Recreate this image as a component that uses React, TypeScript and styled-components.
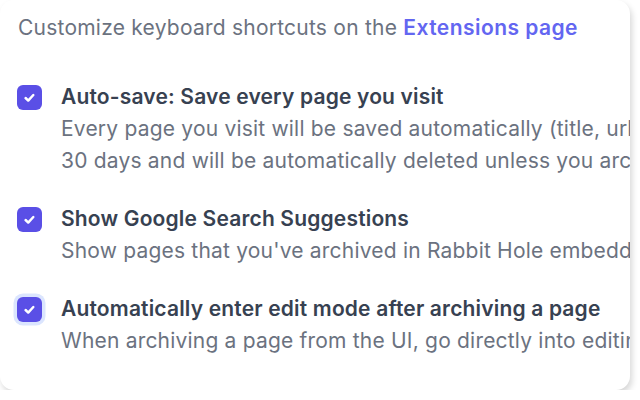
import React from 'react';
import styled, { createGlobalStyle } from 'styled-components';

const GlobalStyle = createGlobalStyle`
  html, body {
    margin: 0;
    padding: 0;
    background: #ffffff;
  }
  body {
    font-family: Inter, "Noto Sans", sans-serif;
    -webkit-font-smoothing: antialiased;
  }
`;

type Setting = {
  id: string;
  title: string;
  lines: string[];
  focused?: boolean;
};

// descriptions are long; the card clips them at its right edge
const settings: Setting[] = [
  {
    id: 'autosave',
    title: 'Auto-save: Save every page you visit',
    lines: [
      'Every page you visit will be saved automatically (title, url and content). Pages are kept for',
      '30 days and will be automatically deleted unless you archive them.',
    ],
  },
  {
    id: 'suggestions',
    title: 'Show Google Search Suggestions',
    lines: ["Show pages that you've archived in Rabbit Hole embedded in your Google search results."],
  },
  {
    id: 'editmode',
    title: 'Automatically enter edit mode after archiving a page',
    lines: ['When archiving a page from the UI, go directly into editing mode so you can add notes.'],
    focused: true,
  },
];

const CheckIcon = () => (
  <svg width="17" height="17" viewBox="0 0 20 20" fill="none">
    <path
      d="M5.4 10.6l3.1 3 6-6.5"
      stroke="#ffffff"
      strokeWidth="2.9"
      strokeLinecap="round"
      strokeLinejoin="round"
    />
  </svg>
);

const App = () => {
  return (
    <>
      <GlobalStyle />
      <Card>
        <Intro>
          Customize keyboard shortcuts on the <Link href="#">Extensions page</Link>
        </Intro>
        <List>
          {settings.map((s) => (
            <Row key={s.id}>
              <BoxSlot>
                <Box $focused={s.focused}>
                  <CheckIcon />
                </Box>
              </BoxSlot>
              <Body>
                <Title>{s.title}</Title>
                {s.lines.map((line) => (
                  <Description key={line}>{line}</Description>
                ))}
              </Body>
            </Row>
          ))}
        </List>
      </Card>
    </>
  );
};

const Card = styled.div`
  box-sizing: border-box;
  width: 630px;
  height: 390px;
  background: #ffffff;
  border-radius: 14px;
  box-shadow: 2px 4px 6px rgba(0, 0, 0, 0.16);
  overflow: hidden;
  padding: 12px 0 0 18px;
`;

const Intro = styled.p`
  margin: 0;
  font-size: 21px;
  line-height: 32px;
  letter-spacing: 0.23px;
  color: #6b7280;
  white-space: nowrap;
`;

const Link = styled.a`
  color: #6366f1;
  font-weight: 600;
  letter-spacing: 0.45px;
  text-decoration: none;
`;

const List = styled.div`
  display: flex;
  flex-direction: column;
  gap: 26px;
  margin-top: 37px;
`;

const Row = styled.div`
  display: flex;
  align-items: flex-start;
  gap: 19px;
`;

const BoxSlot = styled.div`
  flex: none;
  height: 32px;
  display: flex;
  align-items: center;
  margin-left: -1px;
`;

const Box = styled.div<{ $focused?: boolean }>`
  width: 25px;
  height: 25px;
  border-radius: 6px;
  background: #5a4fe6;
  display: flex;
  align-items: center;
  justify-content: center;
  box-shadow: ${(p) => (p.$focused ? '0 0 0 3.5px #dbe5fe' : 'none')};
`;

const Body = styled.div`
  display: flex;
  flex-direction: column;
  min-width: 0;
  white-space: nowrap;
`;

const Title = styled.div`
  font-size: 21px;
  line-height: 32px;
  font-weight: 600;
  letter-spacing: 0.17px;
  color: #374151;
`;

const Description = styled.div`
  font-size: 21px;
  line-height: 32px;
  letter-spacing: 0.2px;
  color: #6b7280;
`;

export default App;
